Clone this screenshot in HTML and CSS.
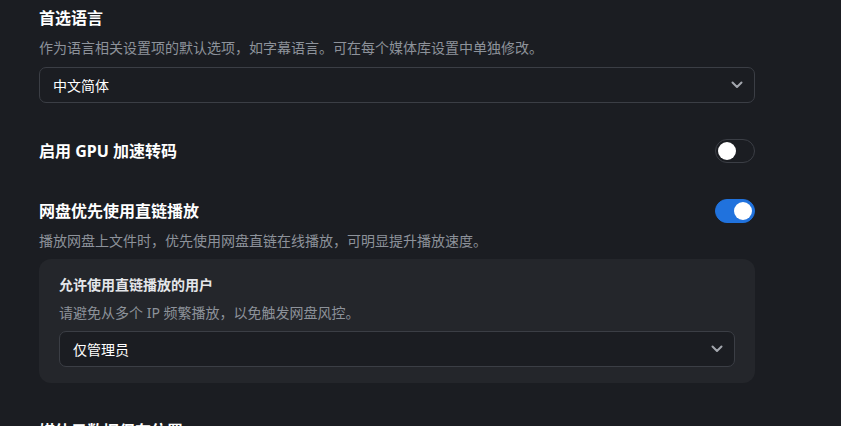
FILE: index.html
```html
<!DOCTYPE html>
<html lang="zh-CN">
<head>
<meta charset="utf-8">
<title>设置</title>
<link rel="stylesheet" href="styles.css">
</head>
<body>
<main class="page">
  <section class="section">
    <h2 class="title">首选语言</h2>
    <p class="desc">作为语言相关设置项的默认选项，如字幕语言。可在每个媒体库设置中单独修改。</p>
    <div class="select">
      <span>中文简体</span>
      <svg class="chev" viewBox="0 0 12 8" width="12" height="8"><path d="M1.5 1.5 L6 6 L10.5 1.5" fill="none" stroke="currentColor" stroke-width="2" stroke-linecap="round" stroke-linejoin="round"/></svg>
    </div>
  </section>

  <section class="section">
    <div class="row">
      <h2 class="title">启用 GPU 加速转码</h2>
      <span class="toggle"><span class="knob"></span></span>
    </div>
  </section>

  <section class="section">
    <div class="row">
      <h2 class="title">网盘优先使用直链播放</h2>
      <span class="toggle on"><span class="knob"></span></span>
    </div>
    <p class="desc">播放网盘上文件时，优先使用网盘直链在线播放，可明显提升播放速度。</p>
    <div class="card">
      <h3 class="subtitle">允许使用直链播放的用户</h3>
      <p class="desc">请避免从多个 IP 频繁播放，以免触发网盘风控。</p>
      <div class="select">
        <span>仅管理员</span>
        <svg class="chev" viewBox="0 0 12 8" width="12" height="8"><path d="M1.5 1.5 L6 6 L10.5 1.5" fill="none" stroke="currentColor" stroke-width="2" stroke-linecap="round" stroke-linejoin="round"/></svg>
      </div>
    </div>
  </section>

  <section class="section">
    <h2 class="title">媒体元数据保存位置</h2>
  </section>
</main>
</body>
</html>
```

FILE: styles.css
```css
* { box-sizing: border-box; }
html, body {
  margin: 0;
  padding: 0;
  background: #1b1d22;
  height: 100%;
  overflow: hidden;
}
body {
  font-family: "Noto Sans", "Noto Sans CJK SC", sans-serif;
  color: #ffffff;
}
.page {
  width: 716px;
  margin-left: 39px;
  padding-top: 6px;
  display: flex;
  flex-direction: column;
  gap: 36px;
}
.section {
  display: flex;
  flex-direction: column;
  gap: 8px;
}
.title {
  margin: 0;
  font-size: 16px;
  line-height: 24px;
  font-weight: 700;
  color: #ffffff;
}
.desc {
  margin: 0;
  font-size: 14px;
  line-height: 20px;
  color: #8d929a;
}
.section > .select { margin-top: 1px; }
.select {
  height: 36px;
  border: 1px solid #3b3e45;
  border-radius: 7px;
  background: #1b1d22;
  display: flex;
  align-items: center;
  justify-content: space-between;
  padding: 0 11px 0 13px;
  font-size: 14px;
  color: #ffffff;
}
.chev { color: #a3a7ae; }
.row {
  display: flex;
  align-items: center;
  justify-content: space-between;
  height: 24px;
}
.toggle {
  width: 40px;
  height: 24px;
  border-radius: 12px;
  border: 1px solid #3b3e45;
  background: transparent;
  display: flex;
  align-items: center;
  padding: 0 2px;
}
.toggle.on {
  background: #2072dd;
  border-color: #2072dd;
  justify-content: flex-end;
}
.knob {
  width: 18px;
  height: 18px;
  border-radius: 50%;
  background: #ffffff;
}
.card {
  background: #24262b;
  border-radius: 12px;
  padding: 16px 20px;
  display: flex;
  flex-direction: column;
  gap: 8px;
}
.subtitle {
  margin: 0;
  font-size: 14px;
  line-height: 20px;
  font-weight: 700;
  color: #e4e6ea;
}
```
